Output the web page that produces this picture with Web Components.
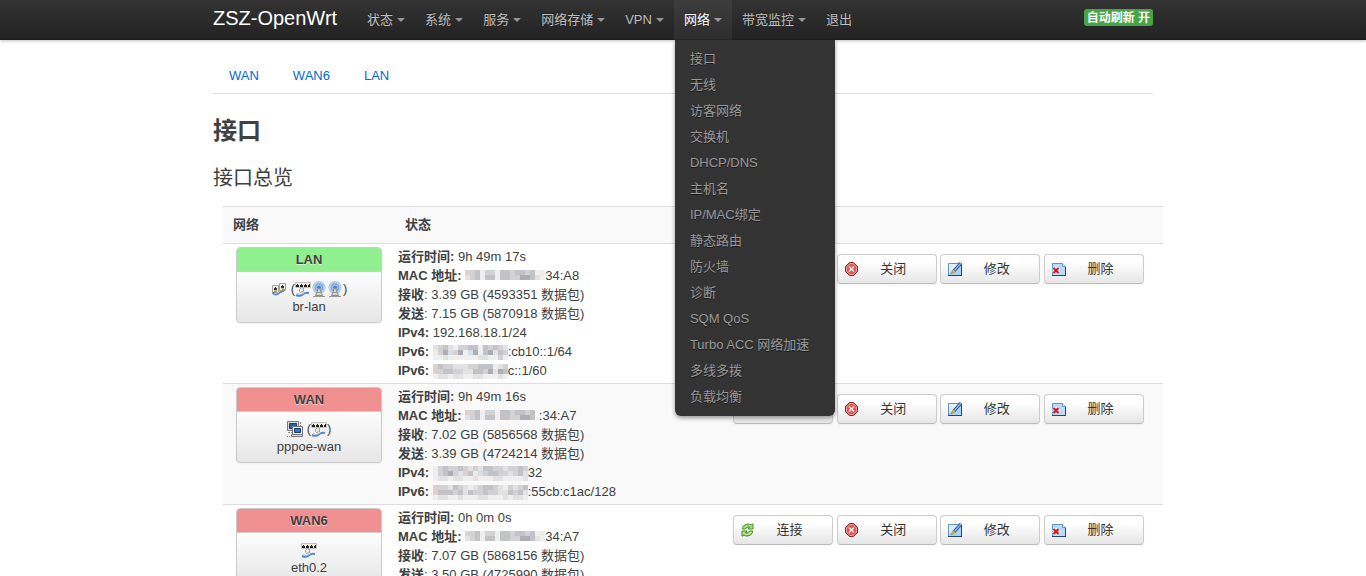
<!DOCTYPE html>
<html lang="zh-CN">
<head>
<meta charset="utf-8">
<title>ZSZ-OpenWrt - 接口</title>
<style>
  body {
    margin: 0;
    background: #fff;
    color: #404040;
    font: 13px/18px "Liberation Sans", "Noto Sans CJK SC", sans-serif;
  }
  main { max-width: 940px; margin: 0 auto; }
  h2 { margin: 19px 0 0; font-size: 24px; line-height: 36px; }
  h3 { margin: 11px 0 10px; font-size: 20px; line-height: 36px; font-weight: 400; }
</style>
</head>
<body>
<top-bar brand="ZSZ-OpenWrt">
  <nav-item label="状态"></nav-item>
  <nav-item label="系统"></nav-item>
  <nav-item label="服务"></nav-item>
  <nav-item label="网络存储"></nav-item>
  <nav-item label="VPN"></nav-item>
  <nav-item label="网络" open>
    <menu-link>接口</menu-link>
    <menu-link>无线</menu-link>
    <menu-link>访客网络</menu-link>
    <menu-link>交换机</menu-link>
    <menu-link>DHCP/DNS</menu-link>
    <menu-link>主机名</menu-link>
    <menu-link>IP/MAC绑定</menu-link>
    <menu-link>静态路由</menu-link>
    <menu-link>防火墙</menu-link>
    <menu-link>诊断</menu-link>
    <menu-link>SQM QoS</menu-link>
    <menu-link>Turbo ACC 网络加速</menu-link>
    <menu-link>多线多拨</menu-link>
    <menu-link>负载均衡</menu-link>
  </nav-item>
  <nav-item label="带宽监控"></nav-item>
  <nav-item label="退出" plain></nav-item>
  <refresh-toggle slot="end">自动刷新 开</refresh-toggle>
</top-bar>
<main>
  <tab-strip>
    <tab-link>WAN</tab-link>
    <tab-link>WAN6</tab-link>
    <tab-link>LAN</tab-link>
  </tab-strip>
  <h2>接口</h2>
  <h3>接口总览</h3>
  <interface-table></interface-table>
</main>

<script>
const define = (name, markup) => {
  customElements.define(name, class extends HTMLElement {
    constructor() {
      super();
      this.attachShadow({ mode: 'open' });
    }
    connectedCallback() {
      this.shadowRoot.innerHTML = typeof markup === 'function' ? markup(this) : markup;
    }
  });
};

define('top-bar', el => `
  <style>
    :host {
      display: block; position: relative; z-index: 10;
      background: linear-gradient(#333, #222);
      box-shadow: 0 1px 3px rgba(0,0,0,.25), inset 0 -1px 0 rgba(0,0,0,.1);
    }
    .inner { display: flex; max-width: 940px; height: 40px; margin: 0 auto; }
    .brand {
      padding: 8px 20px 12px 0; font-size: 20px; line-height: 20px;
      color: #fff; text-decoration: none;
    }
    nav { display: flex; flex: 1; }
  </style>
  <div class="inner">
    <a class="brand" href="#">${el.getAttribute('brand')}</a>
    <nav><slot></slot></nav>
    <slot name="end"></slot>
  </div>`);

define('nav-item', el => `
  <style>
    :host { display: block; position: relative; }
    .top {
      display: flex; align-items: center; gap: 4px; height: 40px; padding: 0 10px;
      color: #bfbfbf; text-decoration: none; white-space: nowrap;
      text-shadow: 0 -1px 0 rgba(0,0,0,.25);
    }
    :host([open]) .top { color: #fff; background: rgba(255,255,255,.05); }
    .caret {
      border: 4px solid transparent; border-top-color: #fff; border-bottom: 0; opacity: .5;
    }
    .menu {
      display: none; position: absolute; top: 40px; left: 1px; width: 160px;
      box-sizing: border-box; padding: 6px 0; background: #333;
      border-radius: 0 0 6px 6px; box-shadow: 0 2px 4px rgba(0,0,0,.4);
    }
    :host([open]) .menu { display: block; }
  </style>
  <a class="top" href="#">${el.getAttribute('label')}${el.hasAttribute('plain') ? '' : '<span class="caret"></span>'}</a>
  <div class="menu"><slot></slot></div>`);

define('menu-link', `
  <style>
    :host { display: block; }
    a {
      display: block; padding: 4px 15px; color: #999; text-decoration: none;
      white-space: nowrap; text-shadow: 0 1px 0 rgba(0,0,0,.5);
    }
    a:hover { color: #fff; background: #222; }
  </style>
  <a href="#"><slot></slot></a>`);

define('refresh-toggle', `
  <style>
    :host { display: block; padding-top: 9px; }
    button {
      display: block; margin: 0; border: 0; padding: 1px 3px 0; border-radius: 3px;
      background: #46a546; color: #fff; font: inherit; font-size: 12px;
      font-weight: bold; line-height: 16px; white-space: nowrap;
    }
  </style>
  <button type="button"><slot></slot></button>`);

define('tab-strip', `
  <style>
    :host { display: flex; gap: 2px; padding-top: 18px; border-bottom: 1px solid #ddd; }
  </style>
  <slot></slot>`);

define('tab-link', `
  <style>
    :host { display: block; }
    a { display: block; padding: 0 16px; line-height: 35px; color: #0069d6; text-decoration: none; }
  </style>
  <a href="#"><slot></slot></a>`);

/* Device glyphs, 16x16 */
const port = (x, y) => `<path fill="#f0f0ea" stroke="#a3a39b" d="M${x}.5 ${y}.5h6v7h-6z"/><path fill="#333" d="M${x + 3} ${y + 2}h1v1h1v2h-3v-2h1z"/><path fill="#c9bd66" d="M${x + 2} ${y + 5}h3v1h-3z"/>`;
const icons = {
  bridge: `${port(1, 4)}${port(8, 2)}
    <path fill="none" stroke="#5a86bd" stroke-width="2" d="M2 11c0 3 4 3 6 1s5-1 5-4"/>
    <path fill="none" stroke="#b5cbe5" d="M3 12c2 1 4 0 5-1"/>
    <path fill="#999" d="M3 10h3v2H3zM11 8h3v2h-3z"/>`,
  ethernet: `<path fill="#ededdf" stroke="#c2c2b6" d="M.5 1.500h15v5H.5z"/>
    <path fill="#222" d="M2 3h1v1h1v2H1V4h1zM6 3h1v1h1v2H5V4h1zM10 3h1v1h1v2H9V4h1zM14 3h1v3h-2V4h1z"/>
    <path fill="#eee" stroke="#999" d="M4.500 8.500l2-2 2 1v3l-3 1-1-1z"/>
    <path fill="none" stroke="#5588c5" stroke-width="2" d="M14 12c-3-1-6 1-7 2s-4 1-6 0"/>
    <path fill="none" stroke="#9dbce0" d="M2 12.500l3 1 4-1"/>`,
  wifi: `<circle cx="8" cy="6.500" r="6.500" fill="#a5c4ea"/>
    <circle cx="8" cy="6.500" r="5" fill="#7fabe0" stroke="#cfe0f4"/>
    <circle cx="8" cy="6.500" r="2.500" fill="#4c80c4" stroke="#b5d0f0"/>
    <path fill="#d8d8d3" stroke="#8d8d88" d="M7.500 7l-3 7.500h7l-3-7.500z"/>
    <path stroke="#999" d="M2 15.500h12M6 11.500h4"/>`,
  tunnel: `<path fill="#ddd" stroke="#777" d="M.5.5h11v9H.5z"/><path fill="#2862ae" stroke="#173d75" d="M2.500 2.500h7v5h-7z"/>
    <path stroke="#888" d="M1 11.500h4M13.500 1v4" stroke-dasharray="2 1"/>
    <path fill="#eee" stroke="#777" d="M5.500 5.500h10v8h-10z"/><path fill="#3974c0" stroke="#173d75" d="M7.500 7.500h6v4h-6z"/>
    <path fill="#ddd" stroke="#777" d="M4.500 13.500h11v2h-11z"/><path stroke="#5c8fcf" d="M0 15.500h4" stroke-dasharray="1 1"/>`,
  reload: `<path fill="#a4dc70" stroke="#4a9430" stroke-linejoin="round"
      d="M2.500 7V5.500Q4 2 8 2q2 0 3 1l1.500-1h.500v5H8l1.500-2q-3-.500-4 2z"/>
    <path fill="#b6e58c" stroke="#3c8423" stroke-linejoin="round"
      d="M12.500 9v1.500q-1.500 3.500-5.500 3.500-2 0-3-1l-1.500 1H2V9h5l-1.500 2q3 .500 4-2z"/>`,
  close: `<path fill="#df5a5a" stroke="#8f2020" d="M5.500 1.500h4l4 4v5l-4 4h-4l-4-4v-5z"/>
    <path fill="none" stroke="#f09a9a" d="M5.900 2.500h3.200l3.400 3.400v4.200l-3.400 3.400H5.900l-3.400-3.400V5.900z"/>
    <path stroke="#fff" stroke-width="1.200" d="M5 5.500l5 5M10 5.500l-5 5"/>`,
  edit: `<path fill="#a9d2fb" stroke="#5c94cf" d="M1.500 2.500h13v12h-13z"/>
    <path fill="#e0effd" d="M2 3h9l-9 9z"/><path stroke="#24466f" d="M1 14.500h14M14.500 3v12"/>
    <path stroke="#284f82" stroke-width="3.200" d="M14 2L7 10"/>
    <path stroke="#8dbdf0" stroke-width="1.400" d="M14 2L7 10"/>
    <path fill="#f6bf2c" stroke="#8a6a1c" stroke-width=".5" d="M6.500 8.500l2.200 2L4 13z"/>`,
  remove: `<path fill="#b9dafb" stroke="#5c94cf" d="M1.500 2.500h10l3 3v9h-13z"/>
    <path fill="#fff" stroke="#5c94cf" d="M11.500 2.500v3h3"/><path stroke="#24466f" d="M1 14.500h14M14.500 6v9"/>
    <path stroke="#fff" stroke-width="4" d="M2.500 7l5 5M7.500 7l-5 5"/>
    <path stroke="#d2151b" stroke-width="2.200" d="M2.500 7l5 5M7.500 7l-5 5"/>`
};

define('device-icon', el => `
  <style>:host { display: inline-block; width: 16px; height: 16px; vertical-align: middle; } svg { display: block; }</style>
  <svg width="16" height="16" viewBox="0 0 16 16" fill="none" aria-hidden="true">${icons[el.getAttribute('name')]}</svg>`);

define('action-button', el => `
  <style>
    :host { display: inline-block; }
    button {
      display: flex; align-items: center; width: 100px; height: 30px; margin: 0;
      padding: 0 6px; border: 1px solid #ccc; border-bottom-color: #bbb; border-radius: 4px;
      background: linear-gradient(#fff 25%, #e6e6e6); color: #333; font: inherit;
      box-shadow: inset 0 1px 0 rgba(255,255,255,.2), 0 1px 2px rgba(0,0,0,.05);
    }
    span { flex: 1; padding: 0 5px 0 2px; text-align: center; }
  </style>
  <button type="button"><device-icon name="${el.getAttribute('icon')}"></device-icon><span><slot></slot></span></button>`);

define('interface-box', el => `
  <style>
    :host {
      display: block; width: 144px; margin: 0 auto; border: 1px solid #ccc; border-radius: 4px;
      overflow: hidden; background: linear-gradient(#fff 25%, #e6e6e6); text-align: center;
      box-shadow: 0 1px 2px rgba(0,0,0,.05);
    }
    .head {
      padding: 3px 0 2px; border-bottom: 1px solid #ccc; font-weight: bold;
      background: ${el.getAttribute('color')}; text-shadow: 0 1px 1px rgba(255,255,255,.7);
    }
    .body { padding: 8px 0 6px; }
    .icons { display: flex; align-items: center; justify-content: center; height: 18px; }
  </style>
  <div class="head">${el.getAttribute('name')}</div>
  <div class="body"><div class="icons"><slot name="icons"></slot></div><slot></slot></div>`);

/* Obscured part of an address: each letter is one 5px cell */
const shades = { a: '#efefef', b: '#e2e2e2', c: '#d2d2d4', d: '#c2c3c7', e: '#adadb5', p: '#e0cfca', l: '#d5dfe8', y: '#f1ebe3' };
const masks = {
  mac: 'pcdaccaddcddcd/bcdaddaddcceed',
  mac2: 'pcdaccaddcddcday/bcdaddaddcceedba',
  v6a: 'bcdbaccddadcdcb/ycelpealeadebdc/aabaaaaaabbaaca',
  v6b: 'pdccbbbccdddabc/pcddccbbddcebed/abbabbaabbaaaba',
  v4: 'acdccdcbcbddccbccdc/acdecbpdylcddccbcdb/abbabbaabaaabbaaaab',
  v6c: 'pccbdcbabcddcbacbcd/pdddcdbdccdccbbdcdb/abbaabaaabbaaababba'
};
define('redacted-cells', el => {
  const rows = masks[el.getAttribute('pattern')].split('/');
  const w = rows[0].length * 5, h = rows.length * 5;
  const cells = rows.map((row, y) => [...row].map((c, x) =>
    `<rect x="${x * 5}" y="${y * 5}" width="5" height="5" fill="${shades[c]}"/>`).join('')).join('');
  return `<style>:host { display: inline-block; vertical-align: ${rows.length > 2 ? 'middle' : 'baseline'}; } svg { display: block; }</style>
    <svg width="${w}" height="${h}" shape-rendering="crispEdges" aria-hidden="true">${cells}</svg>`;
});

const icon = name => `<device-icon name="${name}"></device-icon>`;
const mask = name => `<redacted-cells pattern="${name}"></redacted-cells>`;
const interfaces = [
  { name: 'LAN', color: '#90f090', device: 'br-lan',
    icons: `${icon('bridge')}<span class="sep"></span>(${icon('ethernet')}${icon('wifi')}${icon('wifi')})`,
    lines: ['<b>运行时间:</b> 9h 49m 17s', `<b>MAC 地址:</b> ${mask('mac2')}34:A8`,
      '<b>接收</b>: 3.39 GB (4593351 数据包)', '<b>发送</b>: 7.15 GB (5870918 数据包)',
      '<b>IPv4:</b> 192.168.18.1/24', `<b>IPv6:</b> ${mask('v6a')}:cb10::1/64`, `<b>IPv6:</b> ${mask('v6b')}c::1/60`] },
  { name: 'WAN', color: '#f09090', device: 'pppoe-wan',
    icons: `${icon('tunnel')}<span class="sep"></span>(${icon('ethernet')})`,
    lines: ['<b>运行时间:</b> 9h 49m 16s', `<b>MAC 地址:</b> ${mask('mac')}&nbsp;:34:A7`,
      '<b>接收</b>: 7.02 GB (5856568 数据包)', '<b>发送</b>: 3.39 GB (4724214 数据包)',
      `<b>IPv4:</b> ${mask('v4')}32`, `<b>IPv6:</b> ${mask('v6c')}:55cb:c1ac/128`] },
  { name: 'WAN6', color: '#f09090', device: 'eth0.2', icons: icon('ethernet'),
    lines: ['<b>运行时间:</b> 0h 0m 0s', `<b>MAC 地址:</b> ${mask('mac2')}34:A7`,
      '<b>接收</b>: 7.07 GB (5868156 数据包)', '<b>发送</b>: 3.50 GB (4725990 数据包)'] }
];

define('interface-table', () => `
  <style>
    :host { display: block; margin: 0 -10px 0 10px; }
    table { width: 100%; table-layout: fixed; border-collapse: separate; border-spacing: 0; border-top: 1px solid #ddd; }
    th, td { box-sizing: border-box; }
    .network { width: 172px; }
    .status { width: 319px; }
    th { padding: 9px 10px; text-align: left; background: #f9f9f9; }
    td { padding: 3px; border-top: 1px solid #ddd; vertical-align: top; }
    tr:nth-child(even) td { background: #f9f9f9; }
    .line { height: 19px; line-height: 19px; white-space: nowrap; }
    .actions { padding-top: 10px; text-align: center; white-space: nowrap; }
    .sep { width: 4px; }
  </style>
  <table>
    <thead><tr><th class="network">网络</th><th class="status">状态</th><th></th></tr></thead>
    <tbody>${interfaces.map(i => `
      <tr>
        <td><interface-box name="${i.name}" color="${i.color}">
          <span slot="icons" style="display:flex;align-items:center">${i.icons}</span>${i.device}</interface-box></td>
        <td>${i.lines.map(l => `<div class="line">${l}</div>`).join('')}</td>
        <td class="actions">
          <action-button icon="reload">连接</action-button>
          <action-button icon="close">关闭</action-button>
          <action-button icon="edit">修改</action-button>
          <action-button icon="remove">删除</action-button>
        </td>
      </tr>`).join('')}
    </tbody>
  </table>`);
</script>
</body>
</html>
